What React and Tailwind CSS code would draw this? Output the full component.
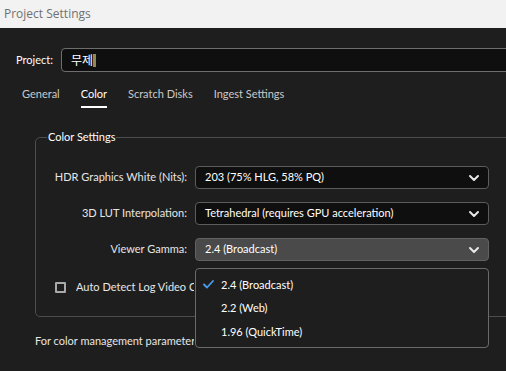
const selects = [
  { label: "HDR Graphics White (Nits):", value: "203 (75% HLG, 58% PQ)" },
  { label: "3D LUT Interpolation:", value: "Tetrahedral (requires GPU acceleration)" },
  { label: "Viewer Gamma:", value: "2.4 (Broadcast)", open: true },
];

const options = [
  { label: "2.4 (Broadcast)", checked: true },
  { label: "2.2 (Web)" },
  { label: "1.96 (QuickTime)" },
];

function Chevron() {
  return (
    <svg width="12" height="8" viewBox="0 0 12 8" className="shrink-0">
      <path d="M2 2 L6 6 L10 2" fill="none" stroke="#e8e8e8" strokeWidth="2" strokeLinecap="round" strokeLinejoin="round" />
    </svg>
  );
}

export default function App() {
  return (
    <div className="relative w-[506px] h-[371px] overflow-hidden bg-[#1e1e1e] flex flex-col font-['Lato','Open_Sans',sans-serif] text-[11px] text-[#e6e6e6]">
      {/* title bar */}
      <div className="h-[28px] shrink-0 bg-[#f2f2f2] flex items-center pl-[4px] text-[12px] text-[#707070] font-['Open_Sans',sans-serif]">
        Project Settings
      </div>

      {/* project name */}
      <div className="flex items-center mt-[20px] pl-[16px] h-[24px]">
        <span className="text-white">Project:</span>
        <div className="ml-[8px] flex-1 -mr-[6px] h-[24px] bg-[#0f0f0f] border border-[#6e6e6e] rounded-l-[4px] flex items-center pl-[9px] text-white font-['Noto_Sans_CJK_KR',sans-serif] text-[12px]">
          무제<span className="inline-block w-[3px] h-[13px] bg-[#8c8a55]" />
        </div>
      </div>

      {/* tabs */}
      <div className="flex items-end h-[36px] pl-[22px] gap-[21px] text-[#c9c9c9]">
        <div className="pb-[6px]">General</div>
        <div className="pb-[4px] text-white border-b-2 border-white">Color</div>
        <div className="pb-[6px]">Scratch Disks</div>
        <div className="pb-[6px]">Ingest Settings</div>
      </div>

      {/* colour settings group */}
      <fieldset className="mt-[22px] ml-[35px] -mr-[20px] h-[187px] border border-[#4d4d4d] rounded-tl-[5px] rounded-bl-[5px] pl-[11px]">
        <legend className="px-[1px] text-white leading-[14px]">Color Settings</legend>
        <div className="flex flex-col gap-[13px] mt-[22px]">
          {selects.map((s) => (
            <div key={s.label} className="flex items-center">
              <div className="w-[148px] shrink-0 text-right pr-[8px] whitespace-nowrap">{s.label}</div>
              <div
                className={
                  s.open
                    ? "w-[294px] h-[23px] rounded-[4px] border border-[#626262] bg-[#4a4a4a] flex items-center justify-between pl-[9px] pr-[8px]"
                    : "w-[294px] h-[23px] rounded-[4px] border border-[#5c5c5c] bg-[#0f0f0f] flex items-center justify-between pl-[9px] pr-[8px]"
                }
              >
                <span className="text-white">{s.value}</span>
                <Chevron />
              </div>
            </div>
          ))}
        </div>
        <div className="flex items-center mt-[18px] pl-[8px]">
          <div className="w-[11px] h-[11px] border-2 border-[#a9a9a9] rounded-[1px]" />
          {/* cut off by the open dropdown */}
          <span className="ml-[10px] w-[118px] overflow-hidden whitespace-nowrap">Auto Detect Log Video Color Space</span>
        </div>
      </fieldset>

      <div className="mt-[16px] ml-[35px] w-[159px] overflow-hidden whitespace-nowrap">
        For color management parameters on clips, use Modify Clip
      </div>

      {/* open dropdown */}
      <div className="absolute left-[195px] top-[268px] w-[294px] h-[80px] bg-[#1e1e1e] border border-[#6a6a6a] rounded-[4px] flex flex-col pt-[4px]">
        {options.map((o) => (
          <div key={o.label} className="h-[23.5px] flex items-center">
            <span className="w-[25px] flex justify-center">
              {o.checked && (
                <svg width="11" height="9" viewBox="0 0 11 9">
                  <path d="M1 4.5 L4 7.5 L10 1" fill="none" stroke="#4a9cf0" strokeWidth="1.8" strokeLinecap="round" strokeLinejoin="round" />
                </svg>
              )}
            </span>
            <span className="text-white">{o.label}</span>
          </div>
        ))}
      </div>
    </div>
  );
}
